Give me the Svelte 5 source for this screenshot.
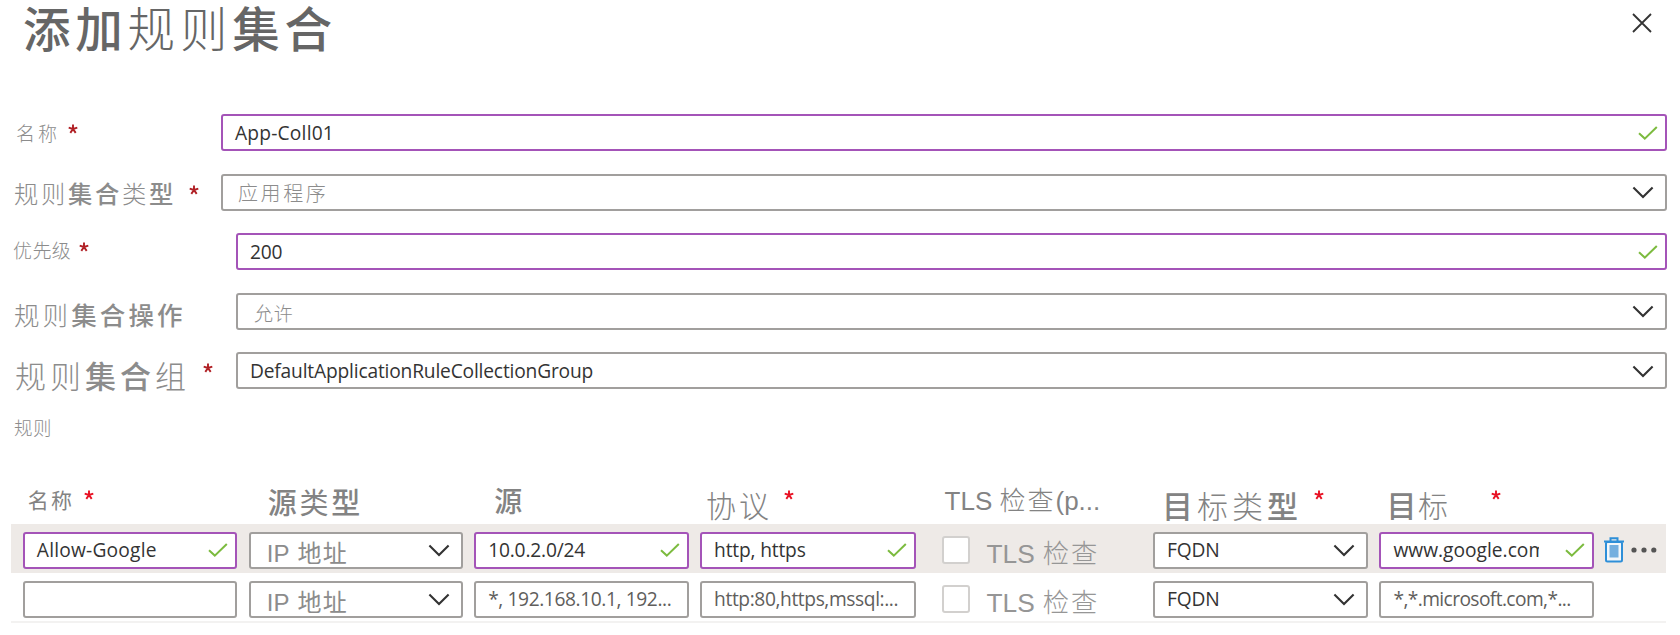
<script>
  // Each label is a list of [text, weight class] runs.
  const fields = [
    { id: 'name', label: [['名称', 'thin']], required: true, value: 'App-Coll01', kind: 'valid' },
    { id: 'type', label: [['规则', 'thin'], ['集合', 'medium'], ['类', 'thin'], ['型', 'medium']], required: true, value: '应用程序', kind: 'select', cjk: true },
    { id: 'priority', label: [['优先级', 'thin']], required: true, value: '200', kind: 'valid' },
    { id: 'action', label: [['规则', 'thin'], ['集合操作', 'medium']], required: false, value: '允许', kind: 'select', cjk: true },
    { id: 'group', label: [['规则', 'thin'], ['集合', 'medium'], ['组', 'thin']], required: true, value: 'DefaultApplicationRuleCollectionGroup', kind: 'select' }
  ];

  const columns = [
    { id: 'c-name', label: [['名称', 'regular']], required: true },
    { id: 'c-srctype', label: [['源', 'medium'], ['类', 'regular'], ['型', 'medium']] },
    { id: 'c-src', label: [['源', 'medium']] },
    { id: 'c-proto', label: [['协议', 'thin']], required: true },
    { id: 'c-tls', label: [['TLS ', 'latin'], ['检查', 'thin'], ['(p...', 'latin']] },
    { id: 'c-dsttype', label: [['目', 'medium'], ['标类', 'thin'], ['型', 'medium']], required: true },
    { id: 'c-dst', label: [['目', 'medium'], ['标', 'thin']], required: true }
  ];

  const rows = [
    { active: true, name: 'Allow-Google', src: '10.0.2.0/24', proto: 'http, https', dst: 'www.google.com' },
    { active: false, name: '', src: '*, 192.168.10.1, 192...', proto: 'http:80,https,mssql:...', dst: '*,*.microsoft.com,*...' }
  ];
</script>

{#snippet check()}
  <svg class="check" viewBox="0 0 20 14" width="20" height="14"><path d="M1 7.2 6.8 12.6 18.8 1" /></svg>
{/snippet}

{#snippet chevron()}
  <svg class="chevron" viewBox="0 0 22 13" width="22" height="13"><path d="M1.4 1.4 11 11 20.6 1.4" /></svg>
{/snippet}

{#snippet star()}
  <svg class="star" viewBox="0 0 10 10" width="10" height="10"><path d="M5 5V.5M5 5 .7 3.7M5 5 9.3 3.7M5 5 2.3 8.9M5 5 7.7 8.9" /></svg>
{/snippet}

{#snippet runs(list)}
  <span class="runs">{#each list as [text, weight]}<span class={weight}>{text}</span>{/each}</span>
{/snippet}

{#snippet cell(value, active, id)}
  <div class={['box', id, { valid: active, hint: !active }]}>
    <span class="value">{value}</span>
    {#if active}{@render check()}{/if}
  </div>
{/snippet}

<main>
  <header>
    <h1>{@render runs([['添加', 'medium'], ['规则', 'thin'], ['集合', 'medium']])}</h1>
    <svg class="close" viewBox="0 0 20 20" width="20" height="20"><path d="M1 1 19 19M19 1 1 19" /></svg>
  </header>

  <section class="form">
    {#each fields as f}
      <div class={['field', f.id]}>
        <div class="label">
          {@render runs(f.label)}
          {#if f.required}{@render star()}{/if}
        </div>
        <div class={['box', { valid: f.kind === 'valid' }]}>
          <span class={['value', { cjk: f.cjk }]}>{f.value}</span>
          {#if f.kind === 'valid'}{@render check()}{:else}{@render chevron()}{/if}
        </div>
      </div>
    {/each}
  </section>

  <h2>{@render runs([['规则', 'thin']])}</h2>

  <section class="table">
    <div class="grid head">
      {#each columns as c}
        <div class={['th', c.id]}>
          {@render runs(c.label)}
          {#if c.required}{@render star()}{/if}
        </div>
      {/each}
    </div>
    {#each rows as r}
      <div class={['grid', 'row', { active: r.active }]}>
        {@render cell(r.name, r.active, 'name')}
        <div class="box ip"><span class="value addr"><span class="latin">IP</span><span class="regular">地址</span></span>{@render chevron()}</div>
        {@render cell(r.src, r.active, 'src')}
        {@render cell(r.proto, r.active, 'proto')}
        <div class="tls"><i></i><span class="latin">TLS</span><span class="thin">检查</span></div>
        <div class="box fqdn"><span class="value">FQDN</span>{@render chevron()}</div>
        {@render cell(r.dst, r.active, 'dst')}
        {#if r.active}
          <div class="tools">
            <svg viewBox="0 0 22 26" width="22" height="26">
              <rect x="3" y="5" width="16" height="19.5" rx="1.5" fill="#f3f7fa" stroke="#2e8fd8" stroke-width="2" />
              <rect x="6.5" y="8" width="9" height="12.5" fill="#74afdf" />
              <path d="M1 4.4H21M7.5 4V1.3h7V4" fill="none" stroke="#2e8fd8" stroke-width="2" />
            </svg>
            <svg viewBox="0 0 26 6" width="26" height="6" fill="#555"><circle cx="3" cy="3" r="2.6" /><circle cx="13" cy="3" r="2.6" /><circle cx="22.8" cy="3" r="2.6" /></svg>
          </div>
        {/if}
      </div>
    {/each}
  </section>
</main>

<style>
  :global(body) { background: #fff; }
  main {
    box-sizing: border-box;
    width: 1680px;
    height: 635px;
    overflow: hidden;
    color: #8c8c8c;
    font-family: 'Noto Sans CJK SC', sans-serif;
  }
  svg { flex: none; display: block; }
  h1, h2 { margin: 0; font-weight: 400; }
  .runs { display: flex; align-items: baseline; line-height: 1; white-space: pre; }
  .thin { font-weight: 300; }
  .regular { font-weight: 400; }
  .medium { font-weight: 500; }
  .latin { font-family: 'Liberation Sans', sans-serif; letter-spacing: 0; }

  header {
    display: flex;
    justify-content: space-between;
    height: 114px;
    padding: 3px 28px 0 23px;
    box-sizing: border-box;
  }
  h1 { color: #666; font-size: 47.5px; letter-spacing: 4.8px; }
  .close { margin-top: 10px; }
  .close path { fill: none; stroke: #333; stroke-width: 1.8; }

  .form { display: flex; flex-direction: column; gap: 22.6px; }
  .field { display: grid; grid-template-columns: 221px 1445.5px; height: 37px; }
  .priority, .action, .group { grid-template-columns: 236px 1430.5px; }
  .label { display: flex; align-items: flex-start; }
  .star path { fill: none; stroke: #b01f24; stroke-width: 1.9; }
  .head .star path { stroke: #e81123; }

  .name .label { padding: 9px 0 0 16px; font-size: 19px; letter-spacing: 3px; }
  .name .star { margin: 1px 0 0 8px; }
  .type .label { padding: 7px 0 0 14px; font-size: 24.3px; letter-spacing: 2.7px; }
  .type .star { margin: 4px 0 0 13px; }
  .priority .label { padding: 7px 0 0 13px; font-size: 19px; letter-spacing: .4px; }
  .priority .star { margin: 2px 0 0 8px; }
  .action .label { padding: 8px 0 0 14px; font-size: 25.5px; letter-spacing: 3.1px; }
  .group .label { padding: 7px 0 0 15px; font-size: 31px; letter-spacing: 4px; }
  .group .star { margin: 4px 0 0 13px; }

  .box {
    box-sizing: border-box;
    display: flex;
    align-items: center;
    justify-content: space-between;
    height: 37px;
    min-width: 0;
    padding: 0 11px 0 12px;
    border: 2px solid #a19f9d;
    border-radius: 3px;
    background: #fff;
  }
  .box.valid { border-color: #a454b8; padding-right: 7px; }
  .value {
    color: #333;
    font-family: 'Open Sans', sans-serif;
    font-size: 19.2px;
    line-height: 28px;
    letter-spacing: -.18px;
    white-space: pre;
  }
  .form .value { padding-top: 1px; }
  .form .value.cjk { color: #8c8c8c; font-family: 'Noto Sans CJK SC', sans-serif; font-weight: 300; font-size: 20px; letter-spacing: 2.6px; padding-left: 3px; }
  .form .action .value.cjk { font-size: 19px; letter-spacing: .7px; padding: 3px 0 0 4px; }
  .form .name .value { letter-spacing: .2px; }
  .hint .value { color: #605e5c; letter-spacing: -.4px; }
  .hint.dst .value { letter-spacing: -.6px; }
  .row.active .name .value { letter-spacing: .2px; }
  .check path { fill: none; stroke: #7cbb3f; stroke-width: 2; }
  .chevron path { fill: none; stroke: #333; stroke-width: 2.1; }
  .form .chevron, .row .chevron { margin-top: 1px; }

  h2 { box-sizing: border-box; padding: 29px 0 0 14px; height: 59.6px; font-size: 18.5px; letter-spacing: .6px; }

  .table { width: 1655px; margin-left: 11px; }
  .grid {
    display: grid;
    grid-template-columns: 214.5px 214px 214.5px 216px 214px 215px 214.5px 60px;
    column-gap: 11.45px;
    padding-left: 11.8px;
  }
  .head { height: 75px; color: #838383; }
  .th { display: flex; align-items: flex-start; }
  .c-name { padding: 40px 0 0 5px; font-size: 21px; letter-spacing: 2.2px; }
  .c-name .star { margin: 1px 0 0 10px; }
  .c-srctype { padding: 38px 0 0 19px; font-size: 29px; letter-spacing: 2.7px; }
  .c-src { padding: 37px 0 0 20px; font-size: 28px; }
  .c-proto { padding: 40px 0 0 6px; font-size: 30px; letter-spacing: 3px; }
  .c-proto .star { margin: 1px 0 0 12px; }
  .c-tls { padding: 37px 0 0 17px; font-size: 26px; letter-spacing: 2px; }
  .c-dsttype { padding: 40px 0 0 9px; font-size: 31px; letter-spacing: 4px; }
  .c-dsttype .star { margin: 1px 0 0 12px; }
  .c-dst { padding: 40px 0 0 7px; font-size: 30px; letter-spacing: 1.6px; }
  .c-dst .star { margin: 1px 0 0 41px; }

  .row { height: 50px; padding-top: 8px; border-bottom: 2px solid #f3f2f1; box-sizing: border-box; }
  .row.active { height: 49px; background: #eeeae7; border-bottom: 0; }
  .row .value { padding-bottom: 1px; }
  .row .addr { display: flex; align-items: baseline; gap: 8px; padding: 5px 0 0 4px; color: #8c8c8c; font-size: 24px; line-height: 28px; letter-spacing: 1.4px; font-family: 'Noto Sans CJK SC', sans-serif; }
  .valid.dst .value { width: 146px; overflow: hidden; }
  .row.active .dst .value { letter-spacing: 0; }
  .tls { display: flex; align-items: baseline; height: 37px; padding-left: 14px; font-size: 26.3px; line-height: 39px; color: #969696; }
  .tls i { box-sizing: border-box; width: 28px; height: 28px; align-self: center; margin-right: 17px; border: 2px solid #d2d0ce; border-radius: 3px; background: #fff; }
  .tls .latin { margin-right: 8px; }
  .tls .thin { letter-spacing: 2px; }
  .tools { display: flex; align-items: center; gap: 6px; height: 37px; margin-left: -2px; }
</style>
